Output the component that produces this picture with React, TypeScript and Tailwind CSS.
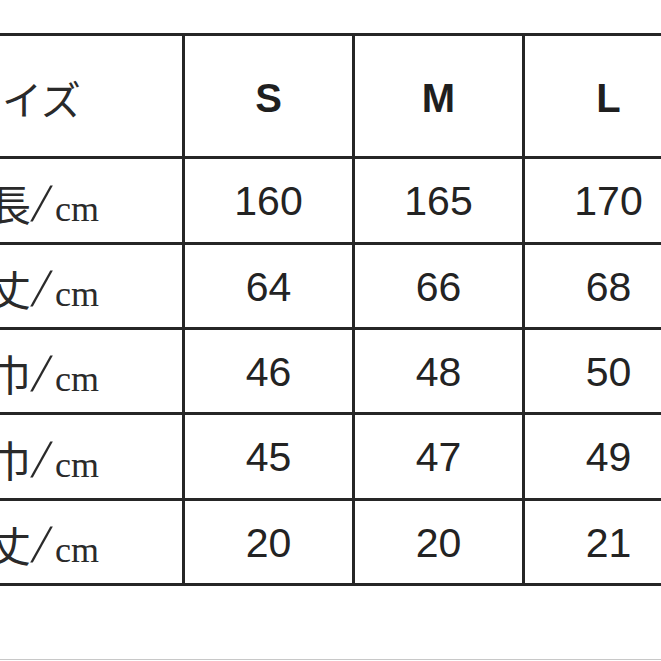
const sizes = ['S', 'M', 'L']

const rows = [
  { label: '身長', values: ['160', '165', '170'], h: 'h-[83px]' },
  { label: '着丈', values: ['64', '66', '68'], h: 'h-[82px]' },
  { label: '身巾', values: ['46', '48', '50'], h: 'h-[82px]' },
  { label: '肩巾', values: ['45', '47', '49'], h: 'h-[83px]' },
  { label: '袖丈', values: ['20', '20', '21'], h: 'h-[82px]' },
]

const jp = { fontFamily: '"Noto Sans CJK JP", sans-serif' }
const serif = { fontFamily: '"Liberation Serif", serif' }
const sans = { fontFamily: '"Liberation Sans", Arial, sans-serif' }

const App = () => {
  return (
    <div className="w-[661px] h-[661px] overflow-hidden bg-white flex flex-col">
      <div className="pt-[33px]">
        {/* size table, the left column runs off the edge */}
        <div className="ml-[-60px] w-[755px] grid grid-cols-[239px_167px_167px_167px] gap-[3px] p-[3px] bg-[#262626]">
          <div className="bg-white h-[120px] flex items-center pl-[19px] pt-[3px]">
            <span className="text-[40px] leading-none text-[#2a2a2a]" style={jp}>
              サイズ
            </span>
          </div>
          {sizes.map((s) => (
            <div key={s} className="bg-white h-[120px] flex items-center justify-center pt-[3px]">
              <span className="text-[40px] font-bold leading-none text-[#1f1f1f]" style={sans}>
                {s}
              </span>
            </div>
          ))}

          {rows.map((row) => (
            <div key={row.label} className="contents">
              <div className={`bg-white ${row.h} flex items-center pl-[4px] pt-[4px] text-[#2a2a2a]`}>
                <div className="flex items-baseline">
                  <span className="text-[42px] leading-none" style={jp}>
                    {row.label}
                  </span>
                  <span
                    className="inline-block text-[54px] leading-none ml-[3px] -skew-x-12"
                    style={serif}
                  >
                    /
                  </span>
                  <span className="text-[36px] leading-none ml-[6px]" style={serif}>
                    cm
                  </span>
                </div>
              </div>
              {row.values.map((v, i) => (
                <div key={i} className={`bg-white ${row.h} flex items-center justify-center pt-[2px]`}>
                  <span className="text-[41px] leading-none text-[#232323]" style={sans}>
                    {v}
                  </span>
                </div>
              ))}
            </div>
          ))}
        </div>
      </div>
      <div className="mt-auto mb-px h-px bg-[#c8c8c8]" />
    </div>
  )
}

export default App
